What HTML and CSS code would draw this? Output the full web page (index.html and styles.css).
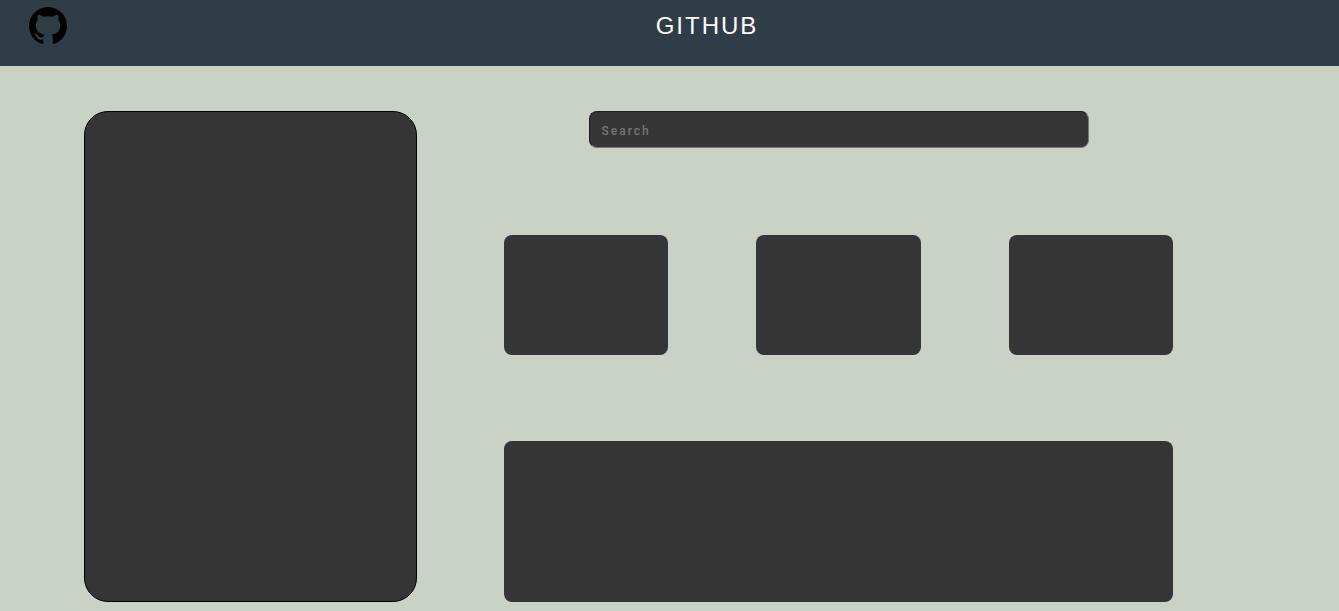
FILE: index.html
```html
<!DOCTYPE html>
<html lang="en">
<head>
  <meta charset="utf-8">
  <meta name="viewport" content="width=device-width, initial-scale=1">
  <title>GitHub</title>
  <link rel="stylesheet" href="styles.css">
</head>
<body>
  <header class="header">
    <svg class="logo" viewBox="0 0 16 16" role="img" aria-label="GitHub logo">
      <path fill-rule="evenodd" d="M8 0C3.58 0 0 3.58 0 8c0 3.54 2.29 6.53 5.47 7.59.4.07.55-.17.55-.38 0-.19-.01-.82-.01-1.49-2.01.37-2.53-.49-2.69-.94-.09-.23-.48-.94-.82-1.13-.28-.15-.68-.52-.01-.53.63-.01 1.08.58 1.23.82.72 1.21 1.87.87 2.33.66.07-.52.28-.87.51-1.07-1.78-.2-3.64-.89-3.64-3.95 0-.87.31-1.59.82-2.15-.08-.2-.36-1.02.08-2.12 0 0 .67-.21 2.2.82.64-.18 1.32-.27 2-.27s1.36.09 2 .27c1.53-1.04 2.2-.82 2.2-.82.44 1.1.16 1.92.08 2.12.51.56.82 1.27.82 2.15 0 3.07-1.87 3.75-3.65 3.95.29.25.54.73.54 1.48 0 1.07-.01 1.93-.01 2.2 0 .21.15.46.55.38A8.01 8.01 0 0 0 16 8c0-4.42-3.58-8-8-8z"/>
    </svg>
    <h1 class="title">GITHUB</h1>
  </header>
  <main class="layout">
    <aside class="sidebar"></aside>
    <div class="content">
      <input class="search" type="search" placeholder="Search" aria-label="Search">
      <section class="cards">
        <article class="card"></article>
        <article class="card"></article>
        <article class="card"></article>
      </section>
      <section class="panel"></section>
    </div>
  </main>
</body>
</html>
```

FILE: styles.css
```css
* {
  box-sizing: border-box;
}

body {
  margin: 0;
  background: #cad2c5;
  font-family: "Liberation Sans", Arial, sans-serif;
}

.header {
  display: flex;
  align-items: flex-start;
  gap: 8px;
  min-height: 66px;
  padding-top: 7px;
  padding-left: 29px;
  background: #2f3e46;
}

.logo {
  width: 38px;
  height: 38px;
  fill: #000;
}

.title {
  flex: 1;
  margin: 5px 0 0;
  color: #fff;
  font-size: 24px;
  font-weight: 400;
  line-height: 28px;
  letter-spacing: 2px;
  text-align: center;
}

.layout {
  display: grid;
  grid-template-columns: 333fr 669fr;
  gap: 87px;
  padding: 45px 166px 9px 84px;
}

.sidebar {
  background: #353535;
  border: 1px solid #000;
  border-radius: 24px;
}

.content {
  display: flex;
  flex-direction: column;
}

.search {
  align-self: center;
  width: 100%;
  max-width: 500px;
  height: 37px;
  padding: 2px 12px 0;
  appearance: none;
  background: #353535;
  border: 1px solid;
  border-color: #1c1c1c #767676 #767676 #1c1c1c;
  border-radius: 8px;
  color: #fff;
  font-family: Roboto, sans-serif;
  font-size: 12px;
  font-weight: 500;
  letter-spacing: 2px;
}

.search::placeholder {
  color: #757575;
}

.cards {
  display: grid;
  grid-template-columns: repeat(3, 1fr);
  gap: 88px;
  margin: 87px 0 86px;
}

.card {
  height: 120px;
  background: #353535;
  border-radius: 8px;
}

.panel {
  height: 161px;
  background: #353535;
  border-radius: 8px;
}
```
